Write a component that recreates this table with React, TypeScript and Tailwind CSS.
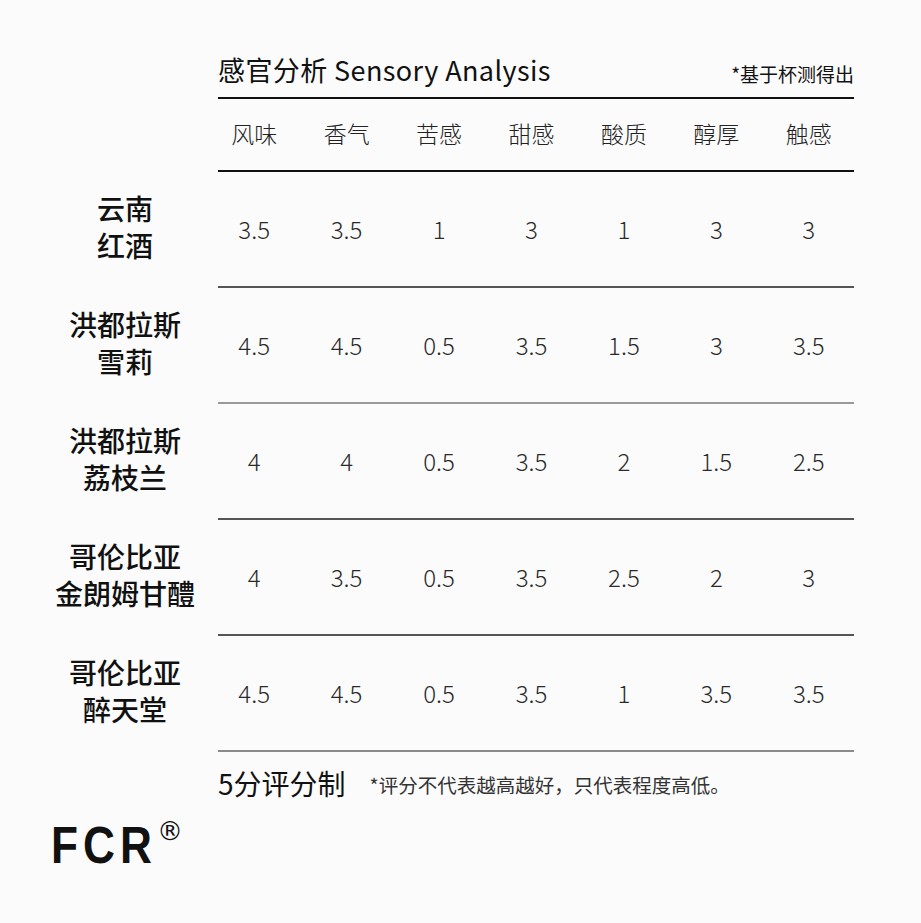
import React from "react";

const cols = ["风味", "香气", "苦感", "甜感", "酸质", "醇厚", "触感"];
const rows: { name: string[]; vals: string[]; line: string }[] = [
  { name: ["云南", "红酒"], vals: ["3.5", "3.5", "1", "3", "1", "3", "3"], line: "bg-[#555]" },
  { name: ["洪都拉斯", "雪莉"], vals: ["4.5", "4.5", "0.5", "3.5", "1.5", "3", "3.5"], line: "bg-[#9a9a9a]" },
  { name: ["洪都拉斯", "荔枝兰"], vals: ["4", "4", "0.5", "3.5", "2", "1.5", "2.5"], line: "bg-[#555]" },
  { name: ["哥伦比亚", "金朗姆甘醴"], vals: ["4", "3.5", "0.5", "3.5", "2.5", "2", "3"], line: "bg-[#555]" },
  { name: ["哥伦比亚", "醉天堂"], vals: ["4.5", "4.5", "0.5", "3.5", "1", "3.5", "3.5"], line: "bg-[#8a8a8a]" },
];

const font = { fontFamily: '"Noto Sans CJK SC", "Noto Sans", sans-serif' };

export default function App() {
  return (
    <div className="w-[921px] h-[923px] bg-[#fbfbfb] text-[#111]" style={font}>
      <div className="pt-[51px]">
        {/* title */}
        <div className="ml-[218px] w-[636px] flex items-end justify-between pb-[8px] border-b-2 border-[#111]">
          <div className="text-[27px] leading-[38px] tracking-[0.4px]">感官分析 Sensory Analysis</div>
          <div className="text-[19px] leading-[24px] pb-[3px]">*基于杯测得出</div>
        </div>
        {/* header */}
        <div className="flex">
          <div className="w-[208px]" />
          <div className="w-[647px] grid grid-cols-7 h-[71px] items-center">
            {cols.map((c) => (
              <div key={c} className="text-center text-[23px] leading-[30px] text-[#222] font-light pb-[4px]">{c}</div>
            ))}
          </div>
        </div>
        <div className="ml-[218px] w-[636px] h-[1.5px] bg-[#111]" />
        {rows.map((r, i) => (
          <div key={i}>
            <div className="flex h-[114.5px] items-center">
              <div className="w-[250px] flex flex-col items-center text-[28px] leading-[37px] font-medium text-[#111] pb-[3px]">
                {r.name.map((n) => (
                  <div key={n}>{n}</div>
                ))}
              </div>
              <div className="w-[647px] -ml-[42px] grid grid-cols-7 items-center">
                {r.vals.map((v, j) => (
                  <div key={j} className="text-center text-[24px] font-light text-[#2a2a2a]">{v}</div>
                ))}
              </div>
            </div>
            <div className={`ml-[218px] w-[636px] h-[1.5px] ${r.line}`} />
          </div>
        ))}
        {/* footer */}
        <div className="ml-[218px] mt-[11px] flex items-end">
          <div className="text-[28px] leading-[40px]">5分评分制</div>
          <div className="ml-[24px] text-[19.5px] leading-[30px] text-[#333] pb-[3px]">*评分不代表越高越好，只代表程度高低。</div>
        </div>
        <div className="ml-[51px] mt-[16px] flex items-start">
          <div className="w-[104px] h-[52px]">
            <div
              className="text-[52px] leading-[52px] font-bold tracking-[6px] text-[#111] scale-x-85 origin-left whitespace-nowrap"
              style={{ fontFamily: '"Liberation Sans", Arial, sans-serif' }}
            >
              FCR
            </div>
          </div>
          <div className="text-[26px] leading-[26px] ml-[2px] -mt-[1px]" style={{ fontFamily: '"DejaVu Sans", sans-serif' }}>®</div>
        </div>
      </div>
    </div>
  );
}
